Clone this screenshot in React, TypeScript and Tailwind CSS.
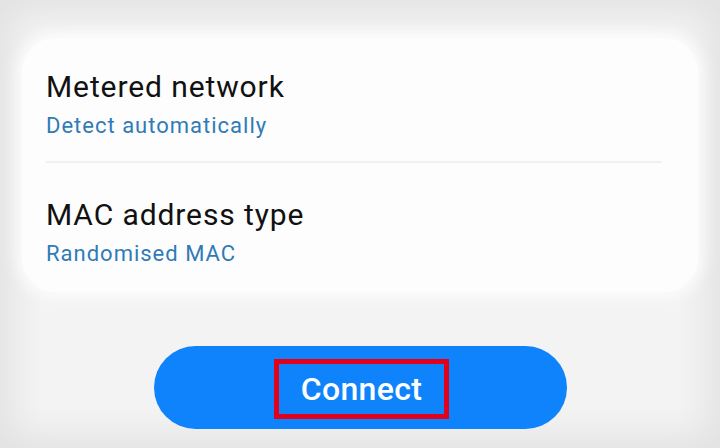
export default function App() {
  return (
    <div
      className="w-[720px] h-[448px] overflow-hidden bg-[#f3f3f3] shadow-[inset_0_0_36px_12px_rgba(0,0,0,0.07)] flex flex-col items-center"
      style={{ fontFamily: 'Roboto, "Noto Sans", sans-serif' }}
    >
      {/* Settings card */}
      <div className="mt-[38px] w-[676px] rounded-[34px] bg-[#fdfdfd] shadow-[0_0_14px_6px_rgba(253,253,253,0.9)] pt-[32px] pb-[25px] pl-[24px] pr-[36px]">
        <div className="flex flex-col">
          <span className="text-[30px] leading-[34px] tracking-[0.9px] text-[#111111]">Metered network</span>
          <span className="mt-[9px] text-[22px] leading-[26px] tracking-[1px] text-[#2f7bb6]">Detect automatically</span>
        </div>
        <div className="mt-[22px] h-[2px] bg-[#f1f1f1]" />
        <div className="mt-[35px] flex flex-col">
          <span className="text-[30px] leading-[34px] tracking-[0.9px] text-[#111111]">MAC address type</span>
          <span className="mt-[9px] text-[22px] leading-[26px] tracking-[1px] text-[#2f7bb6]">Randomised MAC</span>
        </div>
      </div>

      <button className="mt-[54px] w-[413px] h-[83px] rounded-full bg-[#0f83fb] flex items-center justify-center">
        <span className="mt-[3px] ml-[3px] border-[5px] border-[#e3001b] px-[22px] text-[32px] leading-[50px] tracking-[0.3px] font-medium text-white">
          Connect
        </span>
      </button>
    </div>
  );
}
